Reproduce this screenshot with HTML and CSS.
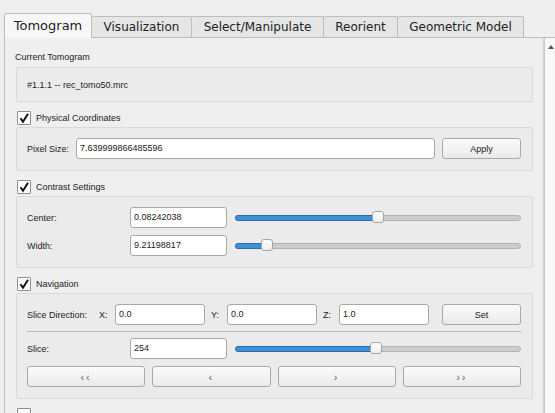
FILE: index.html
```html
<!DOCTYPE html>
<html lang="en">
<head>
    <meta charset="UTF-8">
    <title>Tomogram</title>
    <link rel="stylesheet" href="styles.css">
</head>
<body>

<div class="tabs">
    <div class="tab active">Tomogram</div>
    <div class="tab">Visualization</div>
    <div class="tab">Select/Manipulate</div>
    <div class="tab">Reorient</div>
    <div class="tab">Geometric Model</div>
</div>

<div class="pane">
    <div class="content">
        <div class="caption">Current Tomogram</div>
        <div class="group info">#1.1.1 -- rec_tomo50.mrc</div>

        <div class="check-row">
            <span class="checkbox"><svg width="12" height="12" viewBox="0 0 12 12"><path d="M2.5 6.2 L5 9.8 L10 1.8" fill="none" stroke="#111" stroke-width="2"/></svg></span>
            Physical Coordinates
        </div>
        <div class="group">
            <div class="row">
                <span class="label short">Pixel Size:</span>
                <div class="field grow">7.639999866485596</div>
                <button class="btn side">Apply</button>
            </div>
        </div>

        <div class="check-row">
            <span class="checkbox"><svg width="12" height="12" viewBox="0 0 12 12"><path d="M2.5 6.2 L5 9.8 L10 1.8" fill="none" stroke="#111" stroke-width="2"/></svg></span>
            Contrast Settings
        </div>
        <div class="group">
            <div class="row">
                <span class="label wide">Center:</span>
                <div class="field num">0.08242038</div>
                <div class="slider"><div class="fill" style="width: 50%"></div><div class="handle" style="left: 50%"></div></div>
            </div>
            <div class="row">
                <span class="label wide">Width:</span>
                <div class="field num">9.21198817</div>
                <div class="slider"><div class="fill" style="width: 11%"></div><div class="handle" style="left: 11%"></div></div>
            </div>
        </div>

        <div class="check-row">
            <span class="checkbox"><svg width="12" height="12" viewBox="0 0 12 12"><path d="M2.5 6.2 L5 9.8 L10 1.8" fill="none" stroke="#111" stroke-width="2"/></svg></span>
            Navigation
        </div>
        <div class="group">
            <div class="row">
                <span class="label dir">Slice Direction:</span>
                <span class="axis">X:</span>
                <div class="field coord">0.0</div>
                <span class="axis">Y:</span>
                <div class="field coord">0.0</div>
                <span class="axis">Z:</span>
                <div class="field coord">1.0</div>
                <button class="btn side set">Set</button>
            </div>
            <div class="separator"></div>
            <div class="row">
                <span class="label wide">Slice:</span>
                <div class="field num">254</div>
                <div class="slider"><div class="fill" style="width: 49.3%"></div><div class="handle" style="left: 49.3%"></div></div>
            </div>
            <div class="row steps">
                <button class="btn step">&lsaquo;&lsaquo;</button>
                <button class="btn step">&lsaquo;</button>
                <button class="btn step">&rsaquo;</button>
                <button class="btn step">&rsaquo;&rsaquo;</button>
            </div>
        </div>

        <div class="check-row">
            <span class="checkbox"></span>
        </div>
    </div>
    <div class="scrollbar">
        <div class="arrow"></div>
    </div>
</div>

</body>
</html>
```

FILE: styles.css
```css
body {
    margin: 0;
    padding: 0;
    background-color: #efefef;
    font-family: "Liberation Sans", Arial, sans-serif;
    font-size: 9px;
    color: #222;
    overflow: hidden;
    height: 413px;
}
.tabs {
    display: flex;
    align-items: flex-end;
    padding-left: 4px;
    margin-top: 12px;
    height: 25px;
    position: relative;
    z-index: 2;
}
.tab {
    font-family: "DejaVu Sans", sans-serif;
    font-size: 12px;
    color: #222;
    height: 21px;
    line-height: 20px;
    box-sizing: border-box;
    text-align: center;
    white-space: nowrap;
    background-color: #e6e6e6;
    border: 1px solid #bdbdbd;
    border-bottom: none;
    border-left: none;
    border-radius: 2px 2px 0 0;
}
.tab.active {
    font-size: 13px;
    height: 25px;
    line-height: 23px;
    background-color: #f7f7f7;
    border-left: 1px solid #bdbdbd;
    margin-bottom: -1px;
    width: 88px;
}
.tab:nth-child(2) { width: 100px; }
.tab:nth-child(3) { width: 132px; }
.tab:nth-child(4) { width: 74px; }
.tab:nth-child(5) { width: 126px; }
.pane {
    display: flex;
    margin-left: 4px;
    border-top: 1px solid #bdbdbd;
    border-left: 1px solid #bdbdbd;
    height: 380px;
}
.content {
    flex: 1;
    padding: 13px 10px 0 10px;
    border-right: 1px solid #d0d0d0;
}
.caption {
    height: 12px;
    line-height: 12px;
    margin-bottom: 4px;
}
.group {
    background-color: #ebebeb;
    border: 1px solid #dadada;
    border-radius: 2px;
    margin-left: 1px;
    padding: 10px 11px 11px 10px;
    display: flex;
    flex-direction: column;
    gap: 7px;
}
.group.info {
    height: 35px;
    box-sizing: border-box;
    padding: 0 10px;
    line-height: 35px;
    display: block;
}
.check-row {
    display: flex;
    align-items: center;
    gap: 5px;
    height: 19px;
    margin-top: 6px;
    padding-left: 2px;
}
.checkbox {
    width: 12px;
    height: 12px;
    background-color: #fff;
    border: 1px solid #8e8e8e;
    border-radius: 1px;
    display: flex;
    align-items: center;
    justify-content: center;
}
.row {
    display: flex;
    align-items: center;
    height: 21px;
}
.label {
    flex-shrink: 0;
}
.label.short { width: 49px; }
.label.wide { width: 103px; }
.label.dir { width: 72px; }
.axis {
    width: 16px;
    flex-shrink: 0;
}
.axis + .field + .axis { margin-left: 6px; }
.field {
    height: 21px;
    box-sizing: border-box;
    background-color: #fff;
    border: 1px solid #a9a9a9;
    border-radius: 3px;
    line-height: 19px;
    padding-left: 3px;
}
.field.grow { flex: 1; }
.field.num { width: 97px; }
.field.coord { width: 90px; }
.btn {
    font-family: "Liberation Sans", Arial, sans-serif;
    font-size: 9px;
    color: #222;
    height: 21px;
    background: linear-gradient(#fbfbfb, #eaeaea);
    border: 1px solid #a9a9a9;
    border-radius: 3px;
    padding: 0;
    cursor: pointer;
}
.btn.side {
    width: 79px;
    margin-left: 7px;
    flex-shrink: 0;
}
.btn.set { margin-left: 13px; }
.slider {
    flex: 1;
    margin-left: 8px;
    height: 4px;
    background-color: #cdcdcd;
    border: 1px solid #b4b4b4;
    border-radius: 3px;
    position: relative;
}
.slider .fill {
    position: absolute;
    left: -1px;
    top: -1px;
    bottom: -1px;
    background-color: #3d91d4;
    border: 1px solid #2a6ea8;
    border-radius: 3px;
}
.slider .handle {
    position: absolute;
    top: -5px;
    width: 12px;
    height: 12px;
    margin-left: -6px;
    background: linear-gradient(#ffffff, #eeeeee);
    border: 1px solid #a5a5a5;
    border-radius: 3px;
    box-sizing: border-box;
}
.separator {
    height: 1px;
    background-color: #b9b9b9;
    margin: -1px 0 -1px 0;
}
.steps {
    gap: 7px;
}
.btn.step {
    flex: 1;
    color: #666;
    font-size: 11px;
    letter-spacing: 2px;
}
.scrollbar {
    width: 11px;
    background-color: #f8f8f8;
    border-left: 1px solid #c9c9c9;
    position: relative;
}
.arrow {
    position: absolute;
    left: 3px;
    top: 7px;
    width: 0;
    height: 0;
    border-left: 3px solid transparent;
    border-right: 3px solid transparent;
    border-bottom: 4px solid #555;
}
```
